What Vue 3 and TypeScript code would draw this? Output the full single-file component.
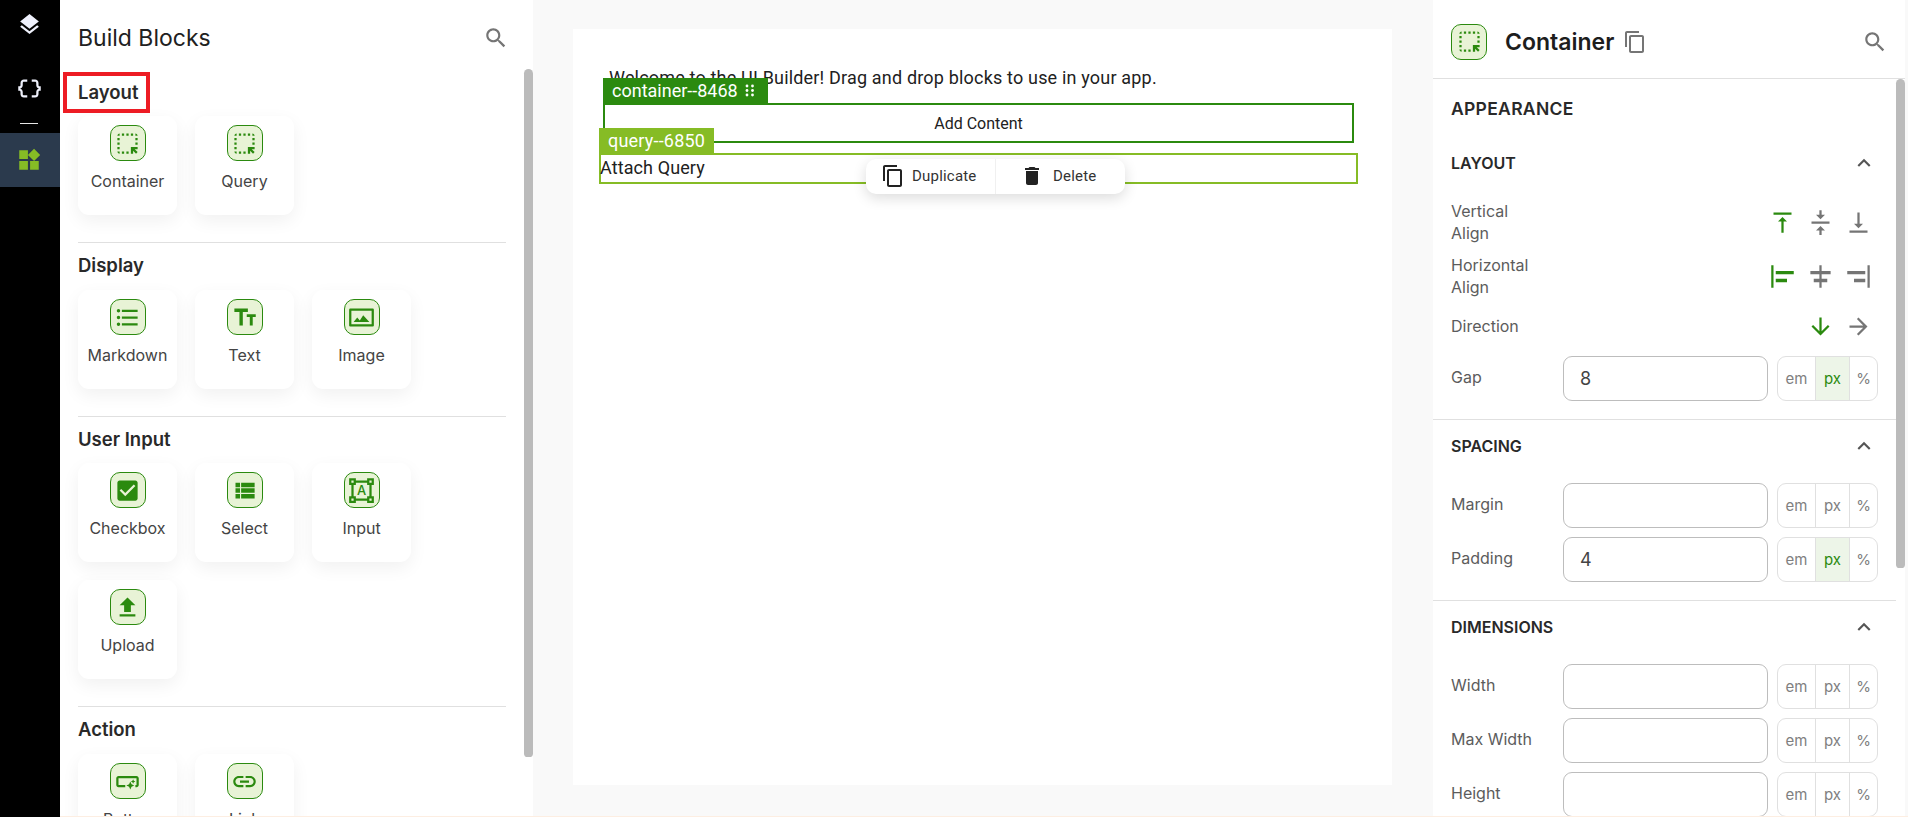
<script setup lang="ts">
interface Block {
  label: string
  icon: string
}

const icons: Record<string, string> = {
  layers: 'M11.99 18.54l-7.37-5.73L3 14.07l9 7 9-7-1.63-1.27-7.38 5.74zM12 16l7.36-5.73L21 9l-9-7-9 7 1.63 1.27L12 16z',
  braces: 'M4 7v2c0 .55-.45 1-1 1H2v4h1c.55 0 1 .45 1 1v2c0 1.65 1.35 3 3 3h3v-2H7c-.55 0-1-.45-1-1v-2c0-1.3-.84-2.42-2-2.83v-.34C5.16 11.42 6 10.3 6 9V7c0-.55.45-1 1-1h3V4H7C5.35 4 4 5.35 4 7zM21 10c-.55 0-1-.45-1-1V7c0-1.65-1.35-3-3-3h-3v2h3c.55 0 1 .45 1 1v2c0 1.3.84 2.42 2 2.83v.34c-1.16.41-2 1.53-2 2.83v2c0 .55-.45 1-1 1h-3v2h3c1.65 0 3-1.35 3-3v-2c0-.55.45-1 1-1h1v-4H21z',
  widgets: 'M13 13v8h8v-8h-8zM3 21h8v-8H3v8zM3 3v8h8V3H3zm13.66-1.31L11 7.34 16.66 13l5.66-5.66-5.66-5.65z',
  search: 'M15.5 14h-.79l-.28-.27C15.41 12.59 16 11.11 16 9.5 16 5.91 13.09 3 9.5 3S3 5.91 3 9.5 5.91 16 9.5 16c1.61 0 3.09-.59 4.23-1.57l.27.28v.79l5 4.99L20.49 19l-4.99-5zm-6 0C7.01 14 5 11.99 5 9.5S7.01 5 9.5 5 14 7.01 14 9.5 11.99 14 9.5 14z',
  copy: 'M16 1H4c-1.1 0-2 .9-2 2v14h2V3h12V1zm3 4H8c-1.1 0-2 .9-2 2v14c0 1.1.9 2 2 2h11c1.1 0 2-.9 2-2V7c0-1.1-.9-2-2-2zm0 16H8V7h11v14z',
  trash: 'M6 19c0 1.1.9 2 2 2h8c1.1 0 2-.9 2-2V7H6v12zM19 4h-3.5l-1-1h-5l-1 1H5v2h14V4z',
  chevron: 'M12 8l-6 6 1.41 1.41L12 10.83l4.59 4.58L18 14z',
  container: 'M17 5h-2V3h2v2zm-2 16h2v-2.59L19.59 21 21 19.59 18.41 17H21v-2h-6v6zm4-12h2V7h-2v2zm0 4h2v-2h-2v2zm-8 8h2v-2h-2v2zM7 5h2V3H7v2zM3 17h2v-2H3v2zm2 4v-2H3c0 1.1.9 2 2 2zM19 3v2h2c0-1.1-.9-2-2-2zm-8 2h2V3h-2v2zM3 9h2V7H3v2zm4 12h2v-2H7v2zm-4-8h2v-2H3v2zm0-8h2V3c-1.1 0-2 .9-2 2z',
  list: 'M4 10.5c-.83 0-1.5.67-1.5 1.5s.67 1.5 1.5 1.5 1.5-.67 1.5-1.5-.67-1.5-1.5-1.5zm0-6c-.83 0-1.5.67-1.5 1.5S3.17 7.5 4 7.5 5.5 6.83 5.5 6 4.83 4.5 4 4.5zm0 12c-.83 0-1.5.68-1.5 1.5s.68 1.5 1.5 1.5 1.5-.68 1.5-1.5-.67-1.5-1.5-1.5zM7 19h14v-2H7v2zm0-6h14v-2H7v2zm0-8v2h14V5H7z',
  size: 'M3 4h12v3h-4.5v12h-3V7H3V4zm11 5h8v2.6h-2.7V19h-2.6v-7.4H14V9z',
  image: 'M2 4h20a1 1 0 0 1 1 1v14a1 1 0 0 1-1 1H2a1 1 0 0 1-1-1V5a1 1 0 0 1 1-1zm1 2v12h18V6H3zm2 10l3.2-4 2.3 2.6 3-4.6 5.5 6H5z',
  check: 'M19 3H5c-1.11 0-2 .9-2 2v14c0 1.1.89 2 2 2h14c1.11 0 2-.9 2-2V5c0-1.1-.89-2-2-2zm-9 14l-5-5 1.41-1.41L10 14.17l7.59-7.59L19 8l-9 9z',
  select: 'M4 14h4v-4H4v4zm0 5h4v-4H4v4zM4 9h4V5H4v4zm5 5h12v-4H9v4zm0 5h12v-4H9v4zM9 5v4h12V5H9z',
  frame: 'M23 7V1h-6v2H7V1H1v6h2v10H1v6h6v-2h10v2h6v-6h-2V7h2zM3 3h2v2H3V3zm2 18H3v-2h2v2zm12-2H7v-2H5V7h2V5h10v2h2v10h-2v2zm4 2h-2v-2h2v2zM19 5V3h2v2h-2z',
  upload: 'M9 16h6v-6h4l-7-7-7 7h4v6zm-4 2h14v2H5v-2z',
  button: 'M22 9v6c0 1.1-.9 2-2 2h-1v-2h1V9H4v6h6v2H4c-1.1 0-2-.9-2-2V9c0-1.1.9-2 2-2h16c1.1 0 2 .9 2 2zm-7.5 10l1.09-2.41L18 15.5l-2.41-1.09L14.5 12l-1.09 2.41L11 15.5l2.41 1.09L14.5 19zm2.5-5l.62-1.38L19 12l-1.38-.62L17 10l-.62 1.38L15 12l1.38.62L17 14z',
  link: 'M3.9 12c0-1.71 1.39-3.1 3.1-3.1h4V7H7c-2.76 0-5 2.24-5 5s2.24 5 5 5h4v-1.9H7c-1.71 0-3.1-1.39-3.1-3.1zM8 13h8v-2H8v2zm9-6h-4v1.9h4c1.71 0 3.1 1.39 3.1 3.1s-1.39 3.1-3.1 3.1h-4V17h4c2.76 0 5-2.24 5-5s-2.24-5-5-5z',
  vTop: 'M8 11h3v10h2V11h3l-4-4-4 4zM4 3v2h16V3H4z',
  vMid: 'M8 19h3v4h2v-4h3l-4-4-4 4zm8-14h-3V1h-2v4H8l4 4 4-4zM4 11v2h16v-2H4z',
  vBot: 'M16 13h-3V3h-2v10H8l4 4 4-4zM4 19v2h16v-2H4z',
  hLeft: 'M4 22H2V2h2v20zM22 7H6v3h16V7zm-6 7H6v3h10v-3z',
  hMid: 'M11 2h2v5h8v3h-8v4h5v3h-5v5h-2v-5H6v-3h5v-4H3V7h8V2z',
  hRight: 'M20 2h2v20h-2V2zM2 10h16V7H2v3zm6 7h10v-3H8v3z',
  down: 'M20 12l-1.41-1.41L13 16.17V4h-2v12.17l-5.58-5.59L4 12l8 8 8-8z',
  right: 'M12 4l-1.41 1.41L16.17 11H4v2h12.17l-5.58 5.59L12 20l8-8z'
}

const groups: { title: string; blocks: Block[] }[] = [
  { title: 'Layout', blocks: [{ label: 'Container', icon: 'container' }, { label: 'Query', icon: 'container' }] },
  { title: 'Display', blocks: [{ label: 'Markdown', icon: 'list' }, { label: 'Text', icon: 'size' }, { label: 'Image', icon: 'image' }] },
  {
    title: 'User Input',
    blocks: [
      { label: 'Checkbox', icon: 'check' },
      { label: 'Select', icon: 'select' },
      { label: 'Input', icon: 'frame' },
      { label: 'Upload', icon: 'upload' }
    ]
  },
  { title: 'Action', blocks: [{ label: 'Button', icon: 'button' }, { label: 'Link', icon: 'link' }] }
]

const alignRows = [
  { label: 'Vertical Align', tall: true, items: [['vTop', true], ['vMid', false], ['vBot', false]] },
  { label: 'Horizontal Align', tall: true, items: [['hLeft', true], ['hMid', false], ['hRight', false]] },
  { label: 'Direction', tall: false, items: [['down', true], ['right', false]] }
] as { label: string; tall: boolean; items: [string, boolean][] }[]

const spacing = [
  { label: 'Margin', value: '', unit: '' },
  { label: 'Padding', value: '4', unit: 'px' }
]
const dimensions = [
  { label: 'Width', value: '', unit: '' },
  { label: 'Max Width', value: '', unit: '' },
  { label: 'Height', value: '', unit: '' }
]
const units = ['em', 'px', '%']
</script>

<template>
  <div class="app">
    <nav class="rail">
      <div class="rail-item first">
        <svg width="25" height="25" viewBox="0 0 24 24"><path :d="icons.layers" /></svg>
      </div>
      <div class="rail-item second">
        <svg width="27" height="27" viewBox="0 0 24 24"><path :d="icons.braces" /></svg>
      </div>
      <div class="rail-sep"></div>
      <div class="rail-item active">
        <svg width="26" height="26" viewBox="0 0 24 24"><path :d="icons.widgets" /></svg>
      </div>
    </nav>

    <aside class="blocks">
      <header class="blocks-head">
        <h1>Build Blocks</h1>
        <svg class="grey" width="26" height="26" viewBox="0 0 24 24"><path :d="icons.search" /></svg>
      </header>
      <div class="blocks-body">
        <div class="blocks-list">
          <section v-for="group in groups" :key="group.title" class="group">
            <h2>
              {{ group.title }}
              <span v-if="group.title === 'Layout'" class="marker"></span>
            </h2>
            <div class="cards">
              <div v-for="block in group.blocks" :key="block.label" class="card">
                <span class="tile">
                  <svg width="27" height="27" viewBox="0 0 24 24">
                    <path fill-rule="evenodd" :d="icons[block.icon]" />
                    <text v-if="block.icon === 'frame'" x="12" y="16.4" class="tile-letter">A</text>
                  </svg>
                </span>
                <span class="card-label">{{ block.label }}</span>
              </div>
            </div>
          </section>
        </div>
        <div class="thumb-track"><div class="thumb left-thumb"></div></div>
      </div>
    </aside>

    <div class="work">
      <main class="stage">
        <div class="page">
          <p class="welcome">Welcome to the UI Builder! Drag and drop blocks to use in your app.</p>
          <div class="box-container">
            <div class="tag tag-green">
              container--8468
              <svg width="10" height="13" viewBox="0 0 10 13">
                <circle cx="2" cy="2" r="1.4" /><circle cx="7.5" cy="2" r="1.4" />
                <circle cx="2" cy="6.5" r="1.4" /><circle cx="7.5" cy="6.5" r="1.4" />
                <circle cx="2" cy="11" r="1.4" /><circle cx="7.5" cy="11" r="1.4" />
              </svg>
            </div>
            Add Content
          </div>
          <div class="box-query">
            <div class="tag tag-lime">query--6850</div>
            <span class="attach">Attach Query</span>
            <div class="toolbar">
              <div class="tool tool-dup">
                <svg width="24" height="24" viewBox="0 0 24 24"><path :d="icons.copy" /></svg>
                Duplicate
              </div>
              <div class="tool tool-del">
                <svg width="24" height="24" viewBox="0 0 24 24"><path :d="icons.trash" /></svg>
                Delete
              </div>
            </div>
          </div>
        </div>
      </main>

      <aside class="props">
        <header class="props-head">
          <span class="tile head-tile">
            <svg width="27" height="27" viewBox="0 0 24 24"><path :d="icons.container" /></svg>
          </span>
          <span class="props-title">Container</span>
          <svg class="grey" width="24" height="24" viewBox="0 0 24 24"><path :d="icons.copy" /></svg>
          <svg class="grey props-search" width="26" height="26" viewBox="0 0 24 24"><path :d="icons.search" /></svg>
        </header>
        <div class="props-body">
          <div class="props-list">
            <div class="appearance">APPEARANCE</div>

            <section class="prop-group">
              <div class="prop-head">
                LAYOUT
                <svg width="26" height="26" viewBox="0 0 24 24"><path :d="icons.chevron" /></svg>
              </div>
              <div v-for="row in alignRows" :key="row.label" class="align-row" :class="{ short: !row.tall }">
                <span class="prop-label narrow">{{ row.label }}</span>
                <div class="align-icons">
                  <span v-for="[name, on] in row.items" :key="name" class="align-icon" :class="{ on }">
                    <svg width="27" height="27" viewBox="0 0 24 24"><path :d="icons[name]" /></svg>
                  </span>
                </div>
              </div>
              <div class="field">
                <span class="prop-label">Gap</span>
                <div class="field-input">8</div>
                <div class="unit-box">
                  <span v-for="u in units" :key="u" class="unit" :class="[{ on: u === 'px' }, 'u-' + u.replace('%', 'pc')]">{{ u }}</span>
                </div>
              </div>
            </section>

            <section class="prop-group">
              <div class="prop-head">
                SPACING
                <svg width="26" height="26" viewBox="0 0 24 24"><path :d="icons.chevron" /></svg>
              </div>
              <div v-for="f in spacing" :key="f.label" class="field">
                <span class="prop-label">{{ f.label }}</span>
                <div class="field-input">{{ f.value }}</div>
                <div class="unit-box">
                  <span v-for="u in units" :key="u" class="unit" :class="[{ on: u === f.unit }, 'u-' + u.replace('%', 'pc')]">{{ u }}</span>
                </div>
              </div>
            </section>

            <section class="prop-group">
              <div class="prop-head">
                DIMENSIONS
                <svg width="26" height="26" viewBox="0 0 24 24"><path :d="icons.chevron" /></svg>
              </div>
              <div v-for="f in dimensions" :key="f.label" class="field">
                <span class="prop-label">{{ f.label }}</span>
                <div class="field-input"></div>
                <div class="unit-box">
                  <span v-for="u in units" :key="u" class="unit" :class="'u-' + u.replace('%', 'pc')">{{ u }}</span>
                </div>
              </div>
            </section>
          </div>
          <div class="thumb-track"><div class="thumb right-thumb"></div></div>
        </div>
      </aside>
    </div>
  </div>
</template>

<style>
html,
body {
  margin: 0;
  height: 100%;
  overflow: hidden;
  background: #fdeee2;
}
</style>

<style scoped>
.app {
  display: flex;
  align-items: flex-start;
  width: 1908px;
  height: 817px;
  font-family: Inter, "Liberation Sans", sans-serif;
  overflow: hidden;
}

/* left rail */
.rail {
  width: 60px;
  height: 817px;
  flex: none;
  background: #000;
  display: flex;
  flex-direction: column;
}
.rail-item {
  display: flex;
  align-items: center;
  justify-content: center;
  padding-right: 2px;
}
.rail-item svg {
  fill: #eef0fb;
}
.rail-item.first {
  height: 48px;
}
.rail-item.second {
  height: 54px;
  margin-top: 13px;
}
.rail-sep {
  width: 18px;
  height: 1px;
  background: #e6e6e6;
  margin: 8px 0 9px 20px;
}
.rail-item.active {
  height: 54px;
  background: #2b3a4d;
}
.rail-item.active svg {
  fill: #86bc25;
}

.grey {
  fill: #757575;
  flex: none;
}

/* blocks panel */
.blocks {
  width: 473px;
  height: 816px;
  flex: none;
  background: #fff;
  display: flex;
  flex-direction: column;
}
.blocks-head {
  height: 69px;
  flex: none;
  box-sizing: border-box;
  padding: 6px 24px 0 18px;
  display: flex;
  align-items: center;
  justify-content: space-between;
}
.blocks-head h1 {
  margin: 0;
  font-size: 23px;
  font-weight: 400;
  color: #212121;
}
.blocks-body {
  flex: 1;
  display: flex;
  min-height: 0;
}
.blocks-list {
  flex: 1;
  padding: 0 18px;
  overflow: hidden;
}
.group {
  padding-bottom: 27px;
  border-bottom: 1px solid #e0e0e0;
}
.group:last-child {
  border-bottom: 0;
}
.group h2 {
  position: relative;
  margin: 11px 0 14px;
  width: fit-content;
  font-size: 18.5px;
  line-height: 22px;
  font-weight: 600;
  color: #292929;
}
.group:first-child h2 {
  margin: 12px 0 13px;
}
.group:nth-child(3) h2 {
  margin-bottom: 13px;
}
.marker {
  position: absolute;
  left: -15px;
  top: -9px;
  width: 87px;
  height: 41px;
  box-sizing: border-box;
  border: 4px solid #ed1c24;
}
.cards {
  display: grid;
  grid-template-columns: repeat(3, 99px);
  gap: 18px;
}
.card {
  height: 99px;
  box-sizing: border-box;
  padding-top: 9px;
  background: #fff;
  border-radius: 11px;
  box-shadow: 0 6px 18px rgba(0, 0, 0, 0.06);
  display: flex;
  flex-direction: column;
  align-items: center;
}
.tile {
  width: 36px;
  height: 36px;
  box-sizing: border-box;
  flex: none;
  border: 1px solid #2b8a0f;
  border-radius: 10px;
  background: #e8f3d6;
  display: flex;
  align-items: center;
  justify-content: center;
}
.tile svg {
  fill: #2b8a0f;
}
.tile-letter {
  font-family: Inter, sans-serif;
  font-size: 11.5px;
  font-weight: 500;
  text-anchor: middle;
}
.card-label {
  margin-top: 9px;
  font-size: 16px;
  line-height: 22px;
  color: #444;
}

.thumb-track {
  width: 9px;
  flex: none;
}
.thumb {
  background: #bbb;
  border-radius: 5px 5px 4px 4px;
}
.left-thumb {
  height: 688px;
}
.right-thumb {
  height: 489px;
}

/* canvas */
.work {
  flex: 1;
  height: 816px;
  display: flex;
  background: #f9f9f9;
  padding-right: 3px;
}
.stage {
  width: 900px;
  flex: none;
  box-sizing: border-box;
  padding: 29px 41px 31px 40px;
}
.page {
  height: 756px;
  box-sizing: border-box;
  padding: 35px 38px 0 30px;
  background: #fff;
  font-family: Roboto, sans-serif;
  font-variant-ligatures: none;
  color: #212121;
}
.welcome {
  margin: 0 0 11px 6px;
  font-size: 18px;
  line-height: 28px;
  letter-spacing: 0.18px;
}
.box-container {
  position: relative;
  height: 40px;
  box-sizing: border-box;
  border: 2px solid #2b8a0f;
  display: flex;
  align-items: center;
  justify-content: center;
  font-size: 16px;
}
.box-query {
  position: relative;
  margin: 10px -4px 0;
  height: 31px;
  box-sizing: border-box;
  border: 2px solid #86bc25;
  display: flex;
  align-items: center;
  font-size: 18px;
}
.attach {
  letter-spacing: 0.1px;
  margin: -2px 0 0 -1px;
}
.tag {
  position: absolute;
  left: -2px;
  bottom: 100%;
  margin-bottom: 2px;
  height: 25px;
  box-sizing: border-box;
  display: flex;
  align-items: center;
  gap: 7px;
  color: #fff;
  font-size: 18px;
  white-space: nowrap;
}
.tag svg {
  fill: #fff;
}
.tag-green {
  background: #2b8a0f;
  padding: 0 13px 0 9px;
}
.tag-lime {
  background: #86bc25;
  padding: 0 9px;
  letter-spacing: 0.2px;
}
.toolbar {
  position: absolute;
  left: 265px;
  top: 4px;
  height: 35px;
  width: 259px;
  background: #fff;
  border-radius: 10px;
  box-shadow: 0 4px 14px rgba(0, 0, 0, 0.14);
  display: flex;
  font-size: 15px;
  color: #333;
  letter-spacing: 0.2px;
}
.tool {
  display: flex;
  align-items: center;
  box-sizing: border-box;
  padding-bottom: 1px;
}
.tool svg {
  fill: #222;
  flex: none;
}
.tool-dup {
  width: 130px;
  padding-left: 15px;
  gap: 7px;
  border-right: 1px solid #f0f0f0;
}
.tool-del {
  flex: 1;
  padding-left: 24px;
  gap: 9px;
}

/* properties panel */
.props {
  width: 472px;
  flex: none;
  height: 816px;
  background: #fff;
  display: flex;
  flex-direction: column;
}
.props-head {
  height: 79px;
  flex: none;
  box-sizing: border-box;
  padding: 5px 18px 0;
  border-bottom: 1px solid #e0e0e0;
  display: flex;
  align-items: center;
}
.head-tile {
  margin-right: 18px;
}
.props-title {
  font-size: 23px;
  font-weight: 600;
  color: #1d1d1d;
  margin-right: 9px;
}
.props-search {
  margin-left: auto;
  margin-right: -1px;
}
.props-body {
  flex: 1;
  display: flex;
  min-height: 0;
}
.props-list {
  flex: 1;
  overflow: hidden;
}
.appearance {
  height: 58px;
  box-sizing: border-box;
  padding: 1px 0 0 18px;
  display: flex;
  align-items: center;
  font-size: 17.5px;
  font-weight: 600;
  letter-spacing: 0.3px;
  color: #292929;
}
.prop-group {
  padding: 0 18px 19px;
  border-bottom: 1px solid #e0e0e0;
}
.prop-group:last-child {
  border-bottom: 0;
}
.prop-head {
  height: 52px;
  margin-bottom: 11px;
  display: flex;
  align-items: center;
  justify-content: space-between;
  font-size: 16px;
  font-weight: 600;
  color: #292929;
}
.prop-head svg {
  fill: #555;
  margin-right: 1px;
}
.prop-label {
  font-size: 16px;
  line-height: 22px;
  color: #5c5c5c;
  width: 112px;
  flex: none;
  margin-top: -1px;
}
.field .prop-label {
  margin-top: -3px;
}
.prop-label.narrow {
  width: 90px;
}
.align-row {
  display: flex;
  align-items: center;
  justify-content: space-between;
  height: 44px;
  margin-bottom: 10px;
}
.align-row:nth-of-type(3) {
  margin-bottom: 8px;
}
.align-row.short {
  height: 40px;
}
.align-icons {
  display: flex;
  margin-right: 1px;
}
.align-icon {
  width: 38px;
  display: flex;
  justify-content: center;
  fill: #757575;
}
.align-icon.on {
  fill: #2b8a0f;
}
.field {
  display: flex;
  align-items: center;
  height: 44px;
  margin-bottom: 10px;
}
.field:last-child {
  margin-bottom: 0;
}
.field-input {
  width: 205px;
  height: 45px;
  flex: none;
  box-sizing: border-box;
  padding-left: 16px;
  border: 1px solid #bdbdbd;
  border-radius: 9px;
  display: flex;
  align-items: center;
  font-size: 18px;
  color: #444;
}
.unit-box {
  margin-left: 9px;
  width: 101px;
  height: 45px;
  box-sizing: border-box;
  border: 1px solid #e0e0e0;
  border-radius: 9px;
  display: flex;
  overflow: hidden;
}
.unit {
  display: flex;
  align-items: center;
  justify-content: center;
  font-size: 15px;
  color: #808080;
}
.u-em {
  width: 37px;
  border-right: 1px solid #e0e0e0;
}
.u-px {
  width: 33px;
  border-right: 1px solid #e0e0e0;
}
.u-pc {
  flex: 1;
}
.unit.on {
  background: #edf5e8;
  color: #2b8a0f;
}
</style>
